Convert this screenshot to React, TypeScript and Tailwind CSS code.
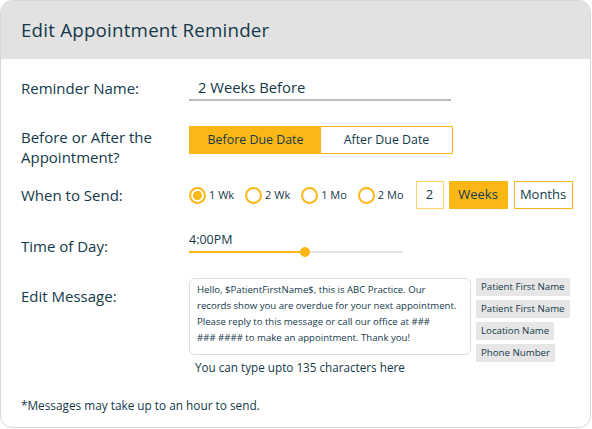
import React from "react";

const font = { fontFamily: '"Open Sans", "Noto Sans", sans-serif' };

function Radio({ label, checked }: { label: string; checked?: boolean }) {
  return (
    <div className="flex items-center gap-[3px]">
      <div className="w-[17px] h-[17px] rounded-full border-2 border-[#fbb715] flex items-center justify-center">
        {checked && <div className="w-[9px] h-[9px] rounded-full bg-[#fbb715]" />}
      </div>
      <span className="text-[11px] text-[#13394a]">{label}</span>
    </div>
  );
}

export default function App() {
  return (
    <div className="w-[592px] h-[429px] bg-white" style={font}>
      <div className="w-[591px] h-[428px] border border-[#d8d8d8] rounded-[12px] overflow-hidden flex flex-col text-[#13394a]">
        <div className="h-[58px] shrink-0 bg-[#e2e2e2] flex items-center pl-[20px]">
          <h1 className="text-[18.75px] font-medium tracking-[0.2px]">Edit Appointment Reminder</h1>
        </div>
        <div className="flex flex-col pl-[20px] pt-[16px]">
          {/* Reminder name */}
          <div className="flex items-center h-[26px]">
            <div className="w-[168px] text-[15px]">Reminder Name:</div>
            <div className="w-[262px] h-[26px] border-b-2 border-[#bdbdbd] flex items-center pl-[9px] text-[14.8px]">
              2 Weeks Before
            </div>
          </div>
          {/* Before or after */}
          <div className="flex items-start mt-[26px]">
            <div className="w-[168px] text-[15px] leading-[20px]">
              Before or After the<br />Appointment?
            </div>
            <div className="flex h-[28px] mt-[-1px] border border-[#fbb715]">
              <div className="w-[131px] bg-[#fbb715] flex items-center justify-center text-[12.4px]">Before Due Date</div>
              <div className="w-[131px] bg-white flex items-center justify-center text-[12.4px]">After Due Date</div>
            </div>
          </div>
          {/* When to send */}
          <div className="flex items-center mt-[14px] h-[28px]">
            <div className="w-[168px] text-[15px]">When to Send:</div>
            <div className="flex items-center gap-[11px]">
              <Radio label="1 Wk" checked />
              <Radio label="2 Wk" />
              <Radio label="1 Mo" />
              <Radio label="2 Mo" />
            </div>
            <div className="ml-[12px] w-[28px] h-[28px] border border-[#fbd36a] flex items-center justify-center text-[13px]">2</div>
            <div className="ml-[5px] w-[59px] h-[28px] bg-[#fbb715] flex items-center justify-center text-[13px]">Weeks</div>
            <div className="ml-[6px] w-[59px] h-[28px] border border-[#fbb715] flex items-center justify-center text-[13px]">Months</div>
          </div>
          {/* Time of day */}
          <div className="flex items-start mt-[23px]">
            <div className="w-[168px] text-[15px] leading-[20px] mt-[4px]">Time of Day:</div>
            <div className="flex flex-col w-[214px]">
              <div className="text-[12.5px] leading-[16px]">4:00PM</div>
              <div className="relative h-[10px] mt-[-1px] flex items-center">
                <div className="h-[2px] w-full bg-[#e6e6e6]" />
                <div className="absolute left-0 top-[4px] h-[2px] w-[116px] bg-[#fbb715]" />
                <div className="absolute left-[111px] top-0 w-[10px] h-[10px] rounded-full bg-[#fbb715]" />
              </div>
            </div>
          </div>
          {/* Edit message */}
          <div className="flex items-start mt-[21px]">
            <div className="w-[168px] text-[15px] leading-[20px] mt-[8px]">Edit Message:</div>
            <div className="flex flex-col">
              <div className="w-[282px] h-[77px] border border-[#dcdcdc] rounded-[6px] pl-[7px] pt-[3px] text-[9.6px] leading-[16px] whitespace-nowrap">
                Hello, $PatientFirstName$, this is ABC Practice. Our<br />
                records show you are overdue for your next appointment.<br />
                Please reply to this message or call our office at ###<br />
                ### #### to make an appointment. Thank you!
              </div>
              <div className="pl-[6px] mt-[4px] text-[11.7px] leading-[16px]">You can type upto 135 characters here</div>
            </div>
            <div className="flex flex-col items-start gap-[4px] ml-[5px]">
              {["Patient First Name", "Patient First Name", "Location Name", "Phone Number"].map((t, i) => (
                <div key={i} className="bg-[#e6e6e6] h-[18px] px-[5px] flex items-center text-[9.7px]">{t}</div>
              ))}
            </div>
          </div>
          <div className="mt-[22px] text-[11.8px] leading-[16px]">*Messages may take up to an hour to send.</div>
        </div>
      </div>
    </div>
  );
}
